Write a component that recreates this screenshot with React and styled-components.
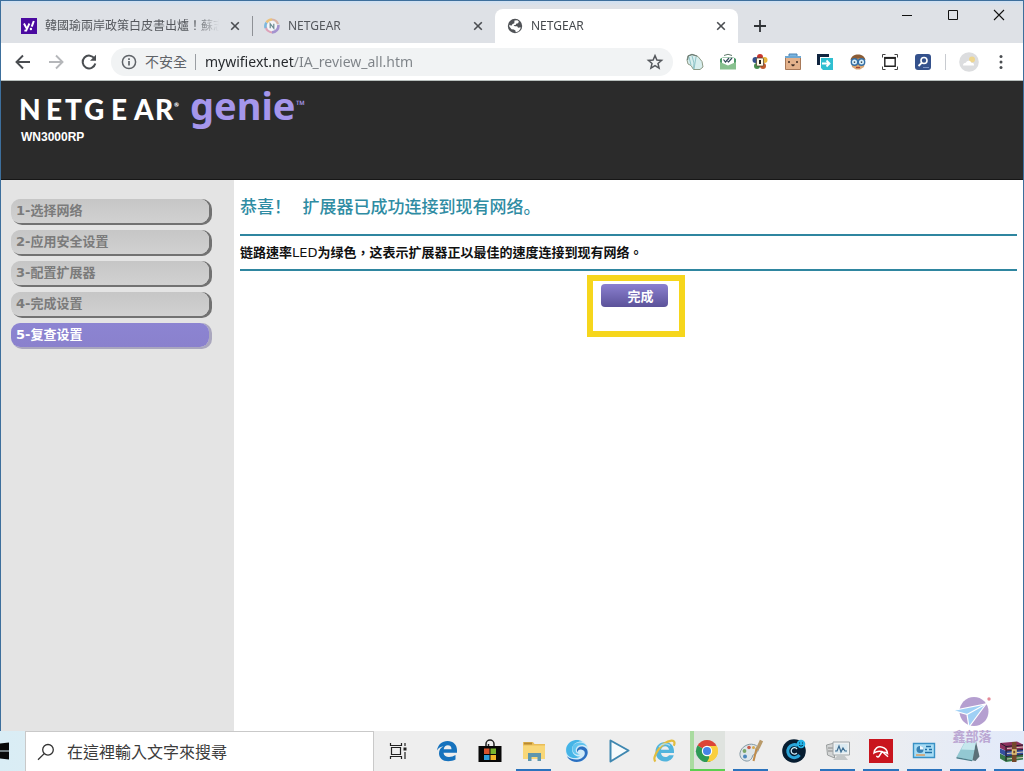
import React from "react";
import styled, { createGlobalStyle } from "styled-components";

const GlobalStyle = createGlobalStyle`
  * {
    box-sizing: border-box;
  }

  body {
    margin: 0;
    background: #ffffff;
    font-family: "Noto Sans", "Noto Sans CJK TC", sans-serif;
  }

  button,
  input {
    font: inherit;
    border: none;
    padding: 0;
    margin: 0;
    background: none;
    outline: none;
  }
`;

const Desktop = styled.div`
  min-height: 100vh;
  display: flex;
  flex-direction: column;
  overflow: hidden;
`;

const Window = styled.div`
  flex: 1;
  display: flex;
  flex-direction: column;
  border: 1px solid #3d6f9c;
  border-bottom: none;
`;

/* ---------- tab strip ---------- */

const TabStrip = styled.header`
  display: flex;
  align-items: flex-end;
  height: 42px;
  padding: 0 1px 0 8px;
  background: linear-gradient(#cfe0f2, #dee1e6 5px);
`;

const Tab = styled.div`
  flex: 0 1 243px;
  min-width: 0;
  height: 34px;
  display: flex;
  align-items: center;
  gap: 8px;
  padding: 0 9px 0 12px;
  border-radius: 8px 8px 0 0;
  color: ${({ $active }) => ($active ? "#45494d" : "#54575c")};
  background: ${({ $active }) => ($active ? "#ffffff" : "transparent")};
`;

const TabDivider = styled.span`
  width: 1px;
  height: 20px;
  margin: 0 -1px 7px 0;
  background: #8e9196;
`;

const TabTitle = styled.span`
  flex: 1;
  min-width: 0;
  overflow: hidden;
  white-space: nowrap;
  font-size: 12px;
  line-height: 18px;
  mask-image: linear-gradient(to left, transparent, #000 24px);
`;

const IconButton = styled.button`
  display: grid;
  place-items: center;
  flex: none;
  width: ${({ $size }) => $size || 16}px;
  height: ${({ $size }) => $size || 16}px;
  color: ${({ $color }) => $color || "#4a4d51"};
`;

const NewTab = styled(IconButton)`
  margin: 0 0 5px 10px;
`;

const WindowControls = styled.div`
  display: flex;
  align-self: flex-start;
  margin-left: auto;

  button {
    width: 46px;
    height: 28px;
    color: #111111;
  }
`;

/* ---------- toolbar ---------- */

const Toolbar = styled.div`
  display: flex;
  align-items: center;
  height: 37px;
  padding: 0 12px;
  background: #ffffff;
`;

const NavButtons = styled.div`
  display: flex;
  gap: 13px;
  margin-right: 12px;
`;

const AddressBar = styled.label`
  flex: 1;
  min-width: 0;
  display: flex;
  align-items: center;
  height: 28px;
  padding: 0 9px;
  border-radius: 14px;
  background: #f1f3f4;
  color: #5f6368;
  font-size: 14px;
`;

const Security = styled.span`
  margin: 0 8px 0 7px;
  padding-right: 8px;
  line-height: 16px;
  border-right: 1px solid #9a9ea3;
`;

const AddressInput = styled.input`
  flex: 1;
  min-width: 0;
  height: 24px;
  margin-left: 1px;
  background: linear-gradient(to right, #24272b 89px, #7d8287 89px);
  background-clip: text;
  -webkit-text-fill-color: transparent;
`;

const Extensions = styled.div`
  display: flex;
  align-items: center;
  justify-content: space-between;
  flex: none;
  width: 326px;
  margin-left: 12px;
`;

const ToolbarDivider = styled.span`
  width: 1px;
  height: 16px;
  background: #c8cbd0;
`;

/* ---------- page ---------- */

const PageHeader = styled.div`
  height: 100px;
  padding: 0 19px;
  border-top: 1px solid #b8bfbd;
  border-bottom: 1px solid #161616;
  background: #2b2b2b;
  color: #ffffff;
`;

const Logo = styled.svg`
  display: block;
  overflow: visible;
`;

const Model = styled.div`
  padding-left: 1px;
  font: bold 12px/16px "Liberation Sans", sans-serif;
`;

const PageBody = styled.div`
  flex: 1;
  display: flex;
`;

const Sidebar = styled.nav`
  flex: none;
  width: 233px;
  padding: 19px 10px;
  background: #e4e4e4;
`;

const StepList = styled.ol`
  display: flex;
  flex-direction: column;
  gap: 7px;
  margin: 0;
  padding: 0;
  list-style: none;
`;

const Step = styled.button`
  display: block;
  width: 198px;
  height: 24px;
  padding: 0 5px;
  border-radius: 9px;
  text-align: left;
  font: bold 13px/24px "DejaVu Sans", "Noto Sans CJK SC", sans-serif;
  color: ${({ $current }) => ($current ? "#ffffff" : "#7b7b7b")};
  background: ${({ $current }) =>
    $current
      ? "linear-gradient(#8c84d2, #8a81cd)"
      : "linear-gradient(#c6c6c6, #d1d1d1)"};
  box-shadow: ${({ $current }) =>
    $current ? "2px 1px 0 1px #aaa7be" : "2px 1px 0 1px #727272"};
`;

const Content = styled.main`
  flex: 1;
  min-width: 0;
  padding: 12px 6px;
  background: #ffffff;
`;

const Title = styled.h1`
  margin: 0 0 14px;
  font: 500 17px/28px "Noto Sans CJK SC", sans-serif;
  color: #2f8ca3;
`;

const Message = styled.p`
  margin: 0;
  padding: 4px 0;
  border: solid #2f86a0;
  border-width: 2px 0;
  font: 13px/24px "DejaVu Sans", "Noto Sans CJK TC", sans-serif;
  color: #111111;

  b {
    font-family: "Noto Sans CJK TC", sans-serif;
  }
`;

const Actions = styled.div`
  display: flex;
  justify-content: center;
  padding: 4px 0 0 14px;
`;

const Highlight = styled.div`
  width: 98px;
  height: 62px;
  padding: 3px 8px;
  border: 6px solid #f6d61c;
`;

const FinishButton = styled.button`
  display: block;
  height: 23px;
  padding: 0 14px 0 27px;
  border-radius: 4px;
  font: bold 13px/22px "Noto Sans CJK SC", sans-serif;
  color: #ffffff;
  background: linear-gradient(#8b80d0, #5b5299);
`;

const Watermark = styled.div`
  position: absolute;
  right: 32px;
  bottom: 27px;
  display: flex;
  flex-direction: column;
  align-items: center;
  font: bold 13px/16px "Noto Sans CJK TC", sans-serif;
  color: #bba7d3;
`;

/* ---------- taskbar ---------- */

const Taskbar = styled.footer`
  position: relative;
  display: flex;
  height: 40px;
  background: linear-gradient(to right, #d9edf5, #eeeeee 380px, #eeeeee 82%, #e2eafa);
`;

const StartButton = styled.button`
  display: flex;
  align-items: center;
  width: 25px;
`;

const SearchBox = styled.label`
  flex: none;
  display: flex;
  align-items: center;
  gap: 12px;
  width: 349px;
  padding-left: 11px;
  border: 1px solid #c9c9c9;
  border-bottom: none;
  background: #ffffff;
`;

const SearchInput = styled.input`
  flex: 1;
  min-width: 0;
  font-size: 16px;

  &::placeholder {
    color: #3c3c3c;
    opacity: 1;
  }
`;

const TaskView = styled.button`
  display: grid;
  place-items: center;
  width: 48px;
`;

const Apps = styled.div`
  flex: 1;
  display: grid;
  grid-template-columns: repeat(14, 1fr);
  margin: 0 -9px 0 3px;
`;

const AppButton = styled.button`
  display: grid;
  place-items: center;
  margin: 0 4px;
  border-bottom: 2px solid ${({ $line }) => $line || "transparent"};
  background: ${({ $open }) => ($open ? "#dfe3df" : "transparent")};
  box-shadow: ${({ $open }) => ($open ? "inset 4px 0 0 #a9dba0" : "none")};

  svg {
    margin-top: 2px;
  }
`;

const Svg = ({ size = 16, children, ...rest }) => (
  <svg
    width={size}
    height={size}
    viewBox={`0 0 ${size} ${size}`}
    fill="none"
    aria-hidden="true"
    {...rest}
  >
    {children}
  </svg>
);

const CloseIcon = () => (
  <Svg>
    <path d="M4.2 4.2l7.6 7.6M11.8 4.2l-7.6 7.6" stroke="currentColor" strokeWidth="1.6" />
  </Svg>
);

const YahooIcon = () => (
  <Svg>
    <path fill="#4b0aa0" d="M0 0h16v16H0z" />
    <path d="M3 5.5l2.5 4.8M8.4 5.5L5.2 12.6H3.4" stroke="#fff" strokeWidth="1.9" />
    <path d="M12.8 3L10.7 8.7" stroke="#fff" strokeWidth="2" />
    <circle cx="9.9" cy="11" r="1.2" fill="#fff" />
  </Svg>
);

const GenieIcon = () => (
  <Svg>
    <circle cx="8" cy="8" r="5" fill="#f5f6fa" />
    <path d="M2.5 4.5A6.5 6.5 0 018 1.5" stroke="#ecc27c" strokeWidth="2.4" />
    <path d="M8 1.5a6.5 6.5 0 016 4.5" stroke="#d9b3a6" strokeWidth="2.2" />
    <path d="M14.3 7A6.4 6.4 0 018 14.4" stroke="#a493cf" strokeWidth="2.6" />
    <path d="M8 14.4A6.4 6.4 0 011.8 9" stroke="#dda0b8" strokeWidth="2" />
    <path d="M1.7 10a6.4 6.4 0 01.7-5.4" stroke="#7db7dd" strokeWidth="2.6" />
    <path d="M6.2 10.3V5.7l3.6 4.6V5.7" stroke="#6a8a90" strokeWidth="1.2" />
  </Svg>
);

const GlobeIcon = () => (
  <Svg>
    <circle cx="8" cy="8" r="7.2" fill="#505357" />
    <path
      fill="#fff"
      d="M7.5 2.6l2.8-.4 1.6 1.2-.8 1.9-2 .5-.4 1.3H6.6l1.2 1.2h2.4l.9 1.4 2.6-.4-.4 1.6-1.8 2.3-2.8 1-.3-1.8-1.6-1-2.3-.2L2.3 8.600V6.800l2 .9 1.300-1.600 1.700-.8z"
    />
  </Svg>
);

const extensions = [
  {
    name: "Shell",
    icon: (
      <>
        <path
          d="M2 8l1-4 4-1.500 6 2 4 5 1 5.500-3 2.500H8.500L6 13.500 3 12z"
          fill="#d8eeee"
          stroke="#8d9a86"
        />
        <path d="M7 4l2 7-.5 6M11 5l-1 6-1 6M4 5l2 8" stroke="#8fc4c8" />
        <path d="M2.500 8l.8-4L7 2.500l5 1.500" stroke="#6f7f78" strokeWidth="1.200" />
      </>
    ),
  },
  {
    name: "Mail checker",
    icon: (
      <>
        <path d="M2 7l3-2h10l3 2v4H2z" fill="#4e9a69" />
        <path d="M4 5.500h12v8H4z" fill="#fff" />
        <path d="M6 3.500a6 4 0 018 0" stroke="#617a6b" />
        <path d="M2 10l8 3.500 8-3.500v7.500H2z" fill="#88c18f" />
        <path d="M5.500 7.500l2 2.500L11 6M9.500 9.300l1 .7L14 6" stroke="#33475a" strokeWidth="1.200" />
      </>
    ),
  },
  {
    name: "Photos",
    icon: (
      <>
        <circle cx="10" cy="5" r="3" fill="#c8372d" />
        <circle cx="5.500" cy="8" r="3" fill="#33508c" />
        <circle cx="14.500" cy="8" r="3" fill="#e8b63a" />
        <circle cx="7" cy="14" r="3" fill="#478e4d" />
        <circle cx="13" cy="14" r="3" fill="#c05b2e" />
        <rect x="6.500" y="6" width="7" height="8" rx="1" fill="#fffbe9" stroke="#473628" strokeWidth=".7" />
        <path d="M9 8h2v4H9z" fill="#222" />
      </>
    ),
  },
  {
    name: "Bag",
    icon: (
      <>
        <path d="M6 4.500V2h8v2.500" fill="#78b5e0" stroke="#4a82b4" />
        <path d="M2.500 4.500h15v13h-15z" fill="#e3b18b" stroke="#a87959" />
        <path d="M2 4h16v2H2z" fill="#6ea7d1" />
        <path d="M6 9v2M14 9v2M8.500 12.500l1.500 1 1.500-1" stroke="#3c2b24" strokeWidth="1.500" />
      </>
    ),
  },
  {
    name: "Transfer",
    icon: (
      <>
        <path d="M3.500 13V3.500H14" stroke="#10253f" strokeWidth="3" />
        <path d="M6 6h12v12H8l-2-2z" fill="#30bfd1" />
        <path d="M7 11.500h7M11.500 8.500l3 3-3 3" stroke="#fff" strokeWidth="1.800" />
      </>
    ),
  },
  {
    name: "Owl",
    icon: (
      <>
        <path d="M3 9c0-4 3-6 7-6s7 2 7 6l-1 6-4 2.500H8L4 15z" fill="#dba772" />
        <path d="M2.500 8c1-4 4-5.500 7.500-5.500s6.500 1.500 7.500 5.500L13 6z" fill="#8b5c36" />
        <circle cx="6.500" cy="10" r="3.200" fill="#d9effa" stroke="#346fa6" strokeWidth="1.400" />
        <circle cx="13.500" cy="10" r="3.200" fill="#d9effa" stroke="#346fa6" strokeWidth="1.400" />
        <path d="M6.500 9.500v1.200M13.500 9.500v1.200" stroke="#112233" strokeWidth="1.400" />
        <path d="M8 15.500h4" stroke="#a14434" strokeWidth="1.300" />
      </>
    ),
  },
  {
    name: "Screen capture",
    icon: (
      <>
        <path d="M2.500 5.500v-3h3M14.500 2.500h3v3M17.500 14.500v3h-3M5.500 17.500h-3v-3" stroke="#444" />
        <path d="M4.800 6h10.400v8.200H4.800z" stroke="#222" strokeWidth="1.400" />
        <path d="M4.100 5.800h11.800" stroke="#222" strokeWidth="1.800" />
      </>
    ),
  },
  {
    name: "Page search",
    icon: (
      <>
        <rect x="2" y="2" width="16" height="16" rx="3" fill="#34518c" />
        <circle cx="11" cy="8.500" r="3" stroke="#fff" strokeWidth="1.600" />
        <path d="M8.700 10.800L5.500 14" stroke="#fff" strokeWidth="1.800" />
        <path d="M10 15.500h6" stroke="#7c94c5" />
      </>
    ),
  },
];

const apps = [
  {
    name: "Edge",
    icon: (
      <path
        fill="#1672bd"
        d="M2 11.500C3 5.500 7 2 12.500 2c6 0 9.500 4 9.500 9v2.800H8.500c.3 3 2.700 4.200 5.500 4.200 2.400 0 4.600-.7 6.500-1.900v4.500c-2 1.100-4.500 1.700-7.300 1.700C7.500 22.300 4 19 4 14.300c0-3.200 1.700-5.700 4.500-7C5.700 7.700 3.500 9 2 11.500zm6.700-1.300h7.800c0-2.500-1.300-4-3.700-4-2.200 0-3.700 1.500-4.100 4z"
      />
    ),
  },
  {
    name: "Store",
    icon: (
      <>
        <path d="M8 8V5a4 4 0 018 0v3M10.500 8V5" stroke="#222" strokeWidth="1.500" />
        <path d="M.5 7h23v16H.5z" fill="#080808" />
        <path d="M6 9.500h5.500V15H6z" fill="#d9522c" />
        <path d="M12.500 9.500H18V15h-5.500z" fill="#79b52e" />
        <path d="M6 16h5.500v5H6z" fill="#2f9cd8" />
        <path d="M12.500 16H18v5h-5.500z" fill="#f0b429" />
      </>
    ),
  },
  {
    name: "File Explorer",
    line: "#2b73bd",
    icon: (
      <>
        <path d="M1 3h10l1.500 2H23v15H1z" fill="#e9bd58" />
        <path d="M1 6.500h22V20H1z" fill="#f8d778" />
        <path d="M2 3.500h8v2H2z" fill="#b98a32" />
        <path d="M6 22v-8h13v8h-3.500v-4h-6v4z" fill="#5d96ad" />
      </>
    ),
  },
  {
    name: "Swirl browser",
    icon: (
      <>
        <circle cx="12" cy="12" r="11.300" fill="#cfeaf8" />
        <path d="M1.500 8C4 1.500 12-1 17.500 2.500c-5-.5-9.500 2-10.300 6.300C6.400 14 10 18 15 17.500 9 21.500-1 18 1.500 8z" fill="#45b4e6" />
        <path d="M8 6.500C11.500 2.500 19 2 22.500 8c-4-3-10-2.500-11.500 1.500-1 3 .8 5.500 4 5.500-4 2.500-9.500-2-7-8.500z" fill="#62c4ee" />
        <path d="M16.500 7.500c5 0 7.500 4.500 5.500 9C19.500 22 13 24.500 7 22c-2.500-1-4-2.700-5-4.700 4.500 3.700 12 4.700 16 .7 3-3 2.300-7-2-7.500-2.500-.2-3.500 1.500-3.200 3C10.500 11 13 7.500 16.500 7.500z" fill="#2b6fc0" />
      </>
    ),
  },
  {
    name: "Media player",
    icon: (
      <path
        d="M2.500 1.500l18 10-18 11z"
        fill="#f5fafc"
        stroke="#3f87b0"
        strokeWidth="2"
        strokeLinejoin="round"
      />
    ),
  },
  {
    name: "Internet Explorer",
    icon: (
      <>
        <path
          fill="#51b4dd"
          d="M3.500 12.500C3.500 7 8 3 13 3c6 0 9.500 4.300 9 11H9c.4 2.800 2 4 4.500 4 1.500 0 2.800-.6 3.500-1.800h4.700C20.500 20.200 17 22.500 13 22.500c-5.500 0-9.500-4.200-9.500-10zM9 10.700h8c-.4-2.300-1.700-3.500-3.800-3.500S9.500 8.500 9 10.700z"
        />
        <path d="M3.500 22.500C-1 19 9 3 19.500 1.700c3-.2 3.700 2 2.300 5" stroke="#e2bd40" strokeWidth="2.200" />
        <path d="M7 8c3-3.500 8-4.300 11-1.500" stroke="#a8def2" strokeWidth="1.200" />
      </>
    ),
  },
  {
    name: "Chrome",
    line: "#5bcf50",
    open: true,
    icon: (
      <>
        <path d="M12 12L2.500 6.500A11 11 0 0121.500 6.500z" fill="#dc4437" />
        <path d="M12 12l9.500-5.500A11 11 0 0112 23z" fill="#f9cf3e" />
        <path d="M12 12l3.500 10.400A11 11 0 012.500 6.500z" fill="#2d9a56" />
        <path d="M12 7h9.800A11 11 0 0112 23l4.500-8.500z" fill="#f9cf3e" />
        <circle cx="12" cy="12" r="5.200" fill="#fff" />
        <circle cx="12" cy="12" r="4" fill="#4784e8" />
      </>
    ),
  },
  {
    name: "Paint",
    line: "#2b73bd",
    icon: (
      <>
        <path
          d="M1 14C2 8 9 4 14.500 5.500c5 1 6 5 3.500 8-1.500 2-4 1.500-4.500 3.500-.5 3-3 5.500-6.500 5-4-.7-6.500-4-6-8z"
          fill="#dde5e9"
          stroke="#8297a3"
        />
        <circle cx="5.500" cy="12" r="1.900" fill="#7ba768" />
        <circle cx="10" cy="8.500" r="1.800" fill="#c75b4d" />
        <circle cx="14.500" cy="8.500" r="1.500" fill="#d8a94d" />
        <circle cx="6" cy="17.500" r="2" fill="#4c87bd" />
        <path d="M22.500 1.500l-3 6.500-2 3" stroke="#b99a6a" strokeWidth="3.500" />
        <path d="M17.500 10l-3 12" stroke="#c08c4b" strokeWidth="2" />
      </>
    ),
  },
  {
    name: "Cloud sync",
    icon: (
      <>
        <circle cx="12" cy="12" r="11.800" fill="#071d31" />
        <path d="M15.500 6.500a6.500 6.500 0 102 9.500" stroke="#2ba5d8" strokeWidth="3" />
        <path d="M15 10a3.200 3.200 0 10-.2 4" stroke="#d2edf8" strokeWidth="1.300" />
        <circle cx="19" cy="5" r="4.300" fill="#25b2e6" />
        <path d="M17 4h1M20 4h1M17 6c1 1.500 3 1.500 4 0" stroke="#073045" />
      </>
    ),
  },
  {
    name: "Resource monitor",
    line: "#2b73bd",
    icon: (
      <>
        <path d="M.5 6l8-2v15l-7-3z" fill="#d3d5d5" stroke="#9a9e9e" />
        <path d="M2 9h5M2 12h5" stroke="#888" />
        <path d="M7 3h16.500v13H7z" fill="#eef1f2" stroke="#a0a6a8" />
        <path d="M9 5h12.500v9H9z" fill="#dbeaf1" />
        <path d="M9 12h2l2-5 2 6 2-4 2 3h2" stroke="#3c6c91" strokeWidth="1.200" />
        <path d="M12 16h6l4 5H7z" fill="#c3c7c8" />
      </>
    ),
  },
  {
    name: "Antivirus",
    line: "#2b73bd",
    icon: (
      <>
        <path d="M0 0h24v24H0z" fill="#c9151e" />
        <path
          d="M5 14c.5-4.500 4-7 7.500-6 4 1 5.800 3.500 6 6.500-1.700-1.200-3.200-1.500-4.500-1.200C11.500 11.800 8 12 5 14z"
          stroke="#fff"
          strokeWidth="1.500"
        />
        <path d="M13.500 12l-3.300 5.200c-.8 1.300-2.500 1-2.600-.4M14 13.300l5 4.500" stroke="#fff" strokeWidth="1.500" />
      </>
    ),
  },
  {
    name: "Control Panel",
    line: "#2b73bd",
    icon: (
      <>
        <path d="M1.500 4.500h21v14h-21z" fill="#a8dcf4" stroke="#3991c5" strokeWidth="1.400" />
        <circle cx="8" cy="10.500" r="3.500" fill="#3881b3" />
        <path d="M8 10.500V7a3.500 3.500 0 013.500 3.500z" fill="#f2faff" />
        <path d="M14 7.500h5M13 10.500h2M17 10.500h3M13 13.500h7" stroke="#1f6fa7" strokeWidth="1.700" />
        <path d="M4 16h9" stroke="#e09853" strokeWidth="1.400" />
      </>
    ),
  },
  {
    name: "Notepad",
    line: "#2b73bd",
    icon: (
      <>
        <path d="M20 2.500l3.500 15-4 4.500-4-1z" fill="#5b7078" />
        <path d="M9 2.500h11L16.500 21.500.5 18z" fill="#93c8d2" />
        <path d="M9 3h10.800l-1.600 8-13-.5z" fill="#c5e7ed" />
        <path d="M.5 18l16 3.200-.5 1L.5 19.500z" fill="#497c88" />
      </>
    ),
  },
  {
    name: "WinRAR",
    line: "#2b73bd",
    icon: (
      <>
        <path d="M1 4l17-1.500 6 3v5L7 12 1 9z" fill="#8c315e" />
        <path d="M1 9.500L7 12l17-1.500v5L7 17.500 1 14z" fill="#354f9f" />
        <path d="M1 14.500l6 3 17-2v5L7 23l-6-3.500z" fill="#37784a" />
        <path d="M7 7.500l17-1.500M7 12l17-1.500M7 17.500l17-2M2 4.500l5 3V22" stroke="#251b29" />
        <path d="M8 9.500l16-1.500M8 14.500l16-1.500M8 20l16-1.500" stroke="#d8c7b5" />
        <path d="M13 3h4.500v20H13z" fill="#73482b" />
        <path d="M13.500 11h3.500v4h-3.500z" stroke="#e3c678" strokeWidth="1.500" />
      </>
    ),
  },
];

const steps = [
  "1-选择网络",
  "2-应用安全设置",
  "3-配置扩展器",
  "4-完成设置",
  "5-复查设置",
];

const tabs = [
  { title: "韓國瑜兩岸政策白皮書出爐！蘇志", icon: <YahooIcon /> },
  { title: "NETGEAR", icon: <GenieIcon /> },
  { title: "NETGEAR", icon: <GlobeIcon />, active: true },
];

function BrowserTabs() {
  return (
    <TabStrip>
      {tabs.map((tab, i) => (
        <React.Fragment key={i}>
          <Tab $active={tab.active}>
            {tab.icon}
            <TabTitle>{tab.title}</TabTitle>
            <IconButton aria-label="Close tab">
              <CloseIcon />
            </IconButton>
          </Tab>
          {i === 0 && <TabDivider />}
        </React.Fragment>
      ))}
      <NewTab $size={24} $color="#2f3236" aria-label="New tab">
        <Svg>
          <path d="M8 2v12M2 8h12" stroke="currentColor" strokeWidth="1.800" />
        </Svg>
      </NewTab>
      <WindowControls>
        <IconButton aria-label="Minimize">
          <Svg>
            <path d="M3 8.500h10" stroke="currentColor" />
          </Svg>
        </IconButton>
        <IconButton aria-label="Maximize">
          <Svg>
            <path d="M3.500 3.500h9v9h-9z" stroke="currentColor" />
          </Svg>
        </IconButton>
        <IconButton aria-label="Close">
          <Svg>
            <path d="M3 3l10 10M13 3L3 13" stroke="currentColor" strokeWidth="1.100" />
          </Svg>
        </IconButton>
      </WindowControls>
    </TabStrip>
  );
}

function BrowserToolbar() {
  return (
    <Toolbar>
      <NavButtons>
        <IconButton $size={20} aria-label="Back">
          <Svg size={20}>
            <path d="M17 10H4M10 3.500L3.500 10l6.500 6.500" stroke="currentColor" strokeWidth="1.900" />
          </Svg>
        </IconButton>
        <IconButton $size={20} $color="#b5b7ba" aria-label="Forward">
          <Svg size={20}>
            <path d="M3 10h13M10 3.500l6.500 6.500-6.500 6.500" stroke="currentColor" strokeWidth="1.900" />
          </Svg>
        </IconButton>
        <IconButton $size={20} aria-label="Reload">
          <Svg size={20}>
            <path d="M15.600 6.800A6.400 6.400 0 1016.300 11.500" stroke="currentColor" strokeWidth="2" />
            <path d="M17 2.800v6h-6z" fill="currentColor" />
          </Svg>
        </IconButton>
      </NavButtons>
      <AddressBar>
        <Svg size={18}>
          <circle cx="9" cy="9" r="6.600" stroke="#5f6368" strokeWidth="1.500" />
          <path d="M9 8v4.500M9 5.200v1.700" stroke="#5f6368" strokeWidth="1.700" />
        </Svg>
        <Security>不安全</Security>
        <AddressInput
          type="text"
          aria-label="Address"
          defaultValue="mywifiext.net/IA_review_all.htm"
        />
        <IconButton $size={18} $color="#55585d" aria-label="Bookmark">
          <Svg size={18}>
            <path
              d="M9 2.600l1.900 4.400 4.700.4-3.600 3.100 1.100 4.700L9 12.700l-4.100 2.500L6 10.500 2.400 7.400l4.700-.4z"
              stroke="currentColor"
              strokeWidth="1.500"
            />
          </Svg>
        </IconButton>
      </AddressBar>
      <Extensions>
        {extensions.map((ext) => (
          <IconButton key={ext.name} $size={20} aria-label={ext.name}>
            <Svg size={20}>{ext.icon}</Svg>
          </IconButton>
        ))}
        <ToolbarDivider />
        <IconButton $size={20} aria-label="Profile">
          <Svg size={20}>
            <circle cx="10" cy="10" r="9.800" fill="#dcdddf" />
            <circle cx="13" cy="7.500" r="3" fill="#eed68f" />
            <path d="M4 13.500c0-2 1.500-3 3-2.800.7-2.500 4.500-2.700 5.300 0 2-.2 3 1 2.700 2.800z" fill="#fff" />
          </Svg>
        </IconButton>
        <IconButton $size={20} aria-label="Menu">
          <Svg size={20}>
            <circle cx="10" cy="4.500" r="1.500" fill="currentColor" />
            <circle cx="10" cy="10" r="1.500" fill="currentColor" />
            <circle cx="10" cy="15.500" r="1.500" fill="currentColor" />
          </Svg>
        </IconButton>
      </Extensions>
    </Toolbar>
  );
}

function NetgearLogo() {
  return (
    <Logo width="300" height="48" viewBox="0 -4 300 48">
      <g fill="#ffffff" fontFamily="Lato, sans-serif" fontWeight="900">
        <text x="-1 26 45 64 91 114 135" y="35" fontSize="28">
          NETGEAR
        </text>
        <text x="154" y="22" fontSize="6">
          ®
        </text>
      </g>
      <g fill="#a596ec" fontFamily="Noto Sans, sans-serif">
        <text x="170" y="35" fontSize="38" fontWeight="700">
          genie
        </text>
        <text x="276" y="24" fontSize="12">
          ™
        </text>
      </g>
    </Logo>
  );
}

function WindowsTaskbar() {
  return (
    <Taskbar>
      <StartButton aria-label="Start">
        <svg width="10" height="18" viewBox="0 0 10 18" aria-hidden="true">
          <path fill="#080808" d="M0 1.500L9 .5v8H0zM0 9.500h9v8l-9-1z" />
        </svg>
      </StartButton>
      <SearchBox>
        <Svg size={18}>
          <circle cx="11" cy="6.800" r="5.300" stroke="#333" strokeWidth="1.300" />
          <path d="M7.200 10.600L1 16.800" stroke="#333" strokeWidth="1.300" />
        </Svg>
        <SearchInput type="text" aria-label="搜尋" placeholder="在這裡輸入文字來搜尋" />
      </SearchBox>
      <TaskView aria-label="Task view">
        <Svg size={18}>
          <path d="M2.500 5.500h9v7h-9zM1.500 1v2.500h11V1M1.500 17v-2.500h11V17" stroke="#222" strokeWidth="1.200" />
          <path d="M16 1v3M16 10v7" stroke="#222" strokeWidth="1.200" />
          <path d="M14.500 5.500h3v3h-3z" fill="#222" />
        </Svg>
      </TaskView>
      <Apps>
        {apps.map((app) => (
          <AppButton key={app.name} aria-label={app.name} $line={app.line} $open={app.open}>
            <Svg size={24}>{app.icon}</Svg>
          </AppButton>
        ))}
      </Apps>
      <Watermark>
        <svg width="40" height="32" viewBox="0 0 40 32" aria-hidden="true">
          <circle cx="22" cy="15.500" r="14.500" fill="#b59fd0" />
          <path d="M1 14.500L34 8 17 31l-2-12.500z" fill="#9fd0f5" stroke="#fff" strokeWidth="1.200" />
          <path d="M15 18.500L34 8" stroke="#fff" strokeWidth="1.200" />
          <circle cx="37" cy="3" r="1.700" fill="#e58a96" />
        </svg>
        鑫部落
      </Watermark>
    </Taskbar>
  );
}

export default function App() {
  return (
    <Desktop>
      <GlobalStyle />
      <Window>
        <BrowserTabs />
        <BrowserToolbar />
        <PageHeader>
          <NetgearLogo />
          <Model>WN3000RP</Model>
        </PageHeader>
        <PageBody>
          <Sidebar>
            <StepList>
              {steps.map((step, i) => (
                <li key={step}>
                  <Step $current={i === steps.length - 1}>{step}</Step>
                </li>
              ))}
            </StepList>
          </Sidebar>
          <Content>
            <Title lang="zh-CN">恭喜！&nbsp;&nbsp; 扩展器已成功连接到现有网络。</Title>
            <Message lang="zh-TW">
              <b>链路速率</b>LED
              <b>为绿色，这表示扩展器正以最佳的速度连接到现有网络。</b>
            </Message>
            <Actions>
              <Highlight>
                <FinishButton>完成</FinishButton>
              </Highlight>
            </Actions>
          </Content>
        </PageBody>
      </Window>
      <WindowsTaskbar />
    </Desktop>
  );
}
